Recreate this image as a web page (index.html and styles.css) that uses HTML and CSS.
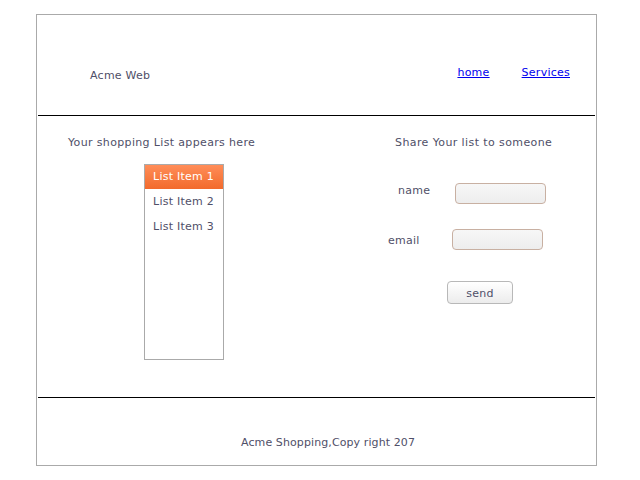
FILE: index.html
```html
<!DOCTYPE html>
<html>
<head>
<meta charset="utf-8">
<link rel="stylesheet" href="styles.css">
</head>
<body>
<div class="frame">
  <header class="header">
    <div class="brand">Acme Web</div>
    <nav class="nav">
      <a href="#">home</a>
      <a href="#">Services</a>
    </nav>
  </header>
  <main class="main">
    <section class="col-left">
      <div class="heading heading-left">Your shopping List appears here</div>
      <ul class="listbox">
        <li class="item item-selected">List Item 1</li>
        <li class="item">List Item 2</li>
        <li class="item">List Item 3</li>
      </ul>
    </section>
    <section class="col-right">
      <div class="heading heading-right">Share Your list to someone</div>
      <div class="row row-name">
        <label class="label label-name">name</label>
        <div class="input"></div>
      </div>
      <div class="row row-email">
        <label class="label label-email">email</label>
        <div class="input"></div>
      </div>
      <div class="button">send</div>
    </section>
  </main>
  <footer class="footer">Acme Shopping,Copy right 207</footer>
</div>
</body>
</html>
```

FILE: styles.css
```css
html, body {
  margin: 0;
  padding: 0;
  background: #fff;
}
body {
  font-family: "DejaVu Sans", Verdana, sans-serif;
  font-size: 11px;
  letter-spacing: 0.25px;
  line-height: 13px;
  color: #4f4f68;
}
.frame {
  margin: 14px 0 0 36px;
  width: 557px;
  height: 450px;
  padding: 0 1px;
  border: 1px solid #aaaaaa;
  display: flex;
  flex-direction: column;
}
.header {
  height: 100px;
  border-bottom: 1px solid #000;
  display: flex;
  align-items: flex-start;
}
.brand {
  margin: 54px 0 0 52px;
}
.nav {
  margin: 51px 25px 0 auto;
  display: flex;
  gap: 32px;
}
.nav a {
  color: #0000ee;
  text-decoration: underline;
}
.main {
  border-bottom: 1px solid #000;
  display: flex;
  padding-top: 20px;
  box-sizing: border-box;
  height: 282px;
}
.col-left {
  width: 300px;
  display: flex;
  flex-direction: column;
  align-items: flex-start;
}
.col-right {
  flex: 1;
  display: flex;
  flex-direction: column;
  align-items: flex-start;
}
.heading-left {
  margin-left: 30px;
  letter-spacing: 0.35px;
}
.heading-right {
  margin-left: 57px;
  letter-spacing: 0.4px;
}
.listbox {
  list-style: none;
  margin: 15px 0 0 106px;
  padding: 0;
  width: 78px;
  height: 194px;
  border: 1px solid #aaaaaa;
}
.item {
  line-height: 25px;
  padding-left: 8px;
}
.item-selected {
  line-height: 24px;
  color: #fff;
  background: linear-gradient(#ff8d58, #f26a2c);
}
.row {
  display: flex;
  align-items: flex-start;
}
.row-name {
  margin-top: 34px;
  padding-left: 60px;
}
.row-email {
  margin-top: 25px;
  padding-left: 50px;
}
.label-name {
  width: 57px;
  margin-top: 1px;
}
.label-email {
  width: 64px;
  margin-top: 5px;
}
.input {
  width: 89px;
  height: 19px;
  border: 1px solid #c8b0a2;
  border-radius: 4px;
  background: linear-gradient(#f7f7f7, #ededed);
}
.button {
  margin: 31px 0 0 109px;
  width: 64px;
  height: 21px;
  line-height: 23px;
  text-align: center;
  border: 1px solid #b8b8b8;
  border-radius: 4px;
  background: linear-gradient(#ffffff, #ececec);
}
.footer {
  height: 67px;
  box-sizing: border-box;
  padding: 38px 0 0 203px;
  letter-spacing: 0.1px;
}
```
